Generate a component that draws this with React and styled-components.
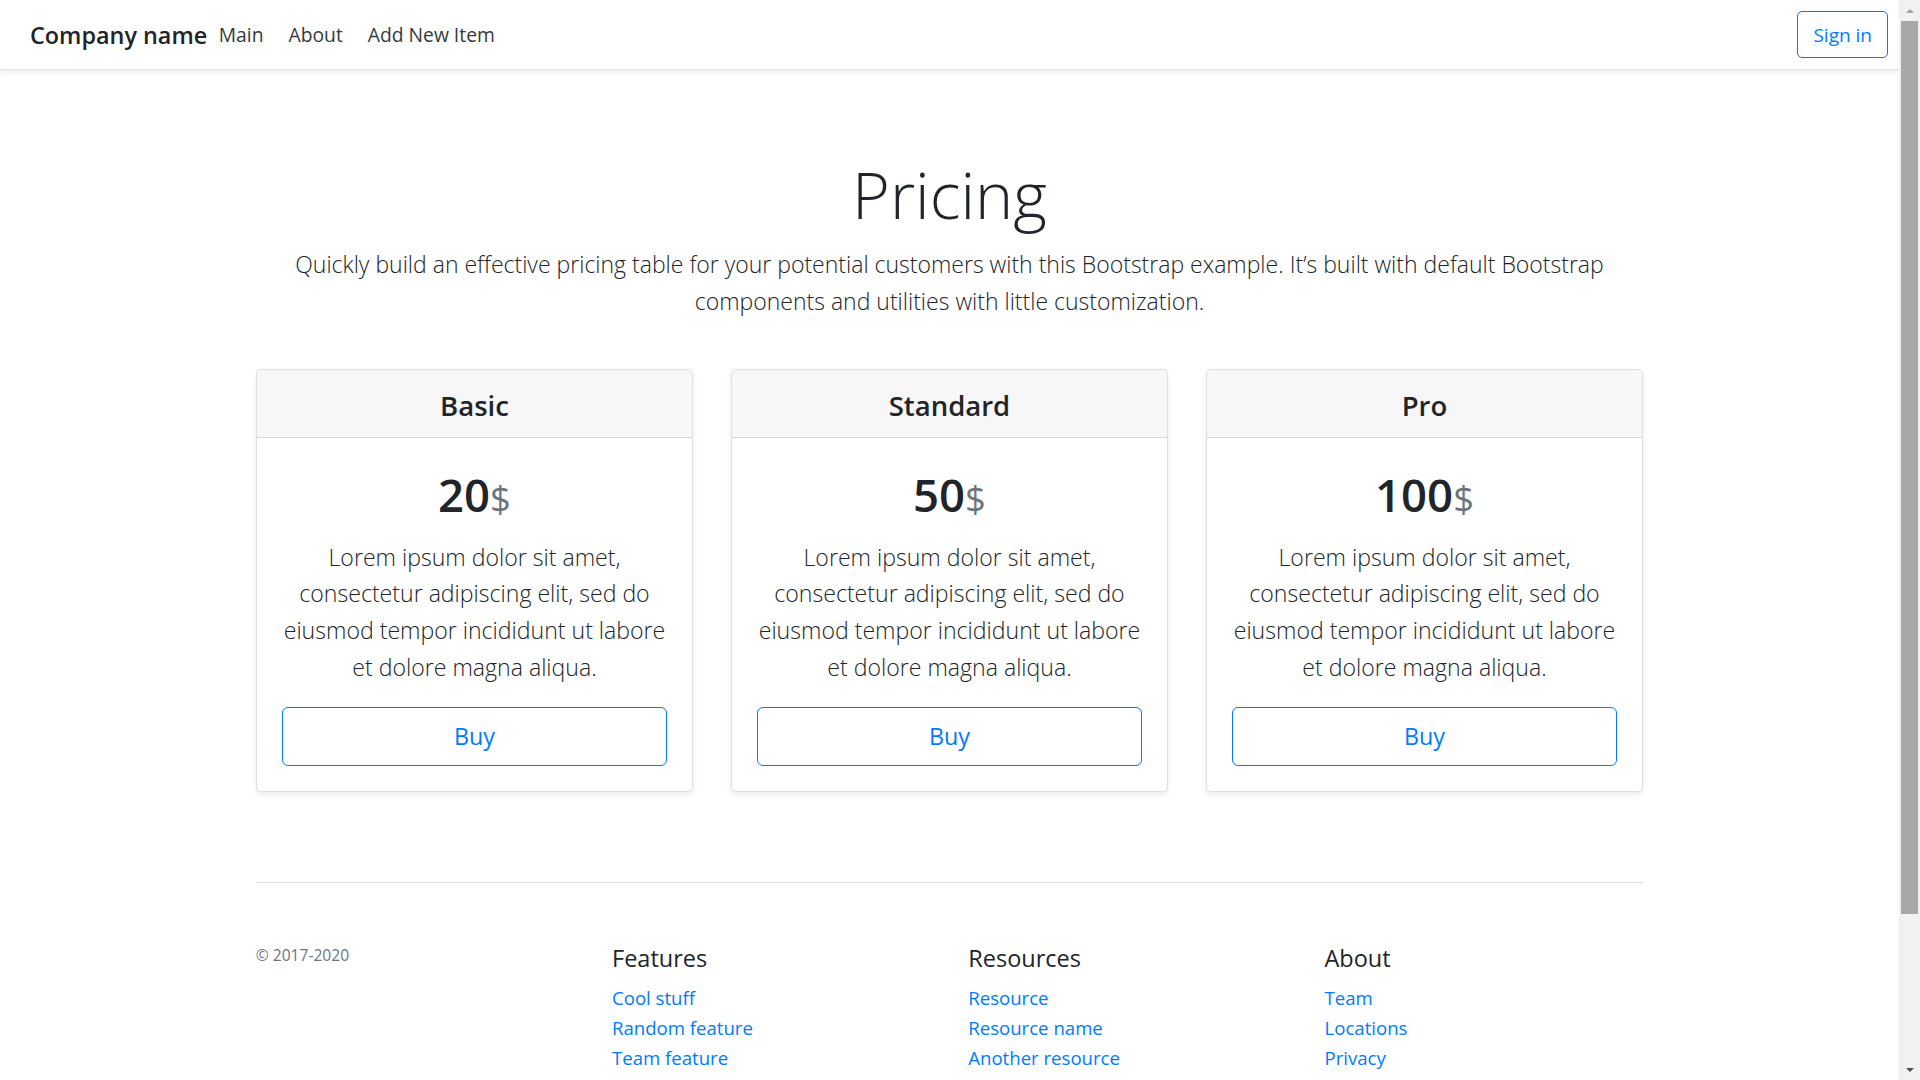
import React from "react";
import styled, { createGlobalStyle } from "styled-components";

const Global = createGlobalStyle`
  html, body { margin: 0; padding: 0; }
  body {
    font-family: "Open Sans", "Noto Sans", "Liberation Sans", sans-serif;
    font-size: 20px;
    line-height: 1.5;
    color: #212529;
    background: #fff;
  }
`;

const Page = styled.div`
  margin-right: 21px;
  min-height: 1255px;
`;

/* Window scrollbar drawn over the right edge, as in the screenshot */
const ScrollTrack = styled.div`
  position: fixed;
  top: 0;
  right: 0;
  width: 21px;
  height: 100vh;
  background: #f1f1f1;
  display: flex;
  flex-direction: column;
  align-items: center;
`;

const ScrollArrow = styled.div`
  height: 21px;
  width: 21px;
  flex: none;
  display: flex;
  align-items: center;
  justify-content: center;
  &::before {
    content: "";
    width: 0;
    height: 0;
    border-left: 4.5px solid transparent;
    border-right: 4.5px solid transparent;
    ${(p) =>
      p.$down
        ? "border-top: 4.5px solid #505050;"
        : "border-bottom: 4.5px solid #a3a3a3;"}
  }
`;

const ScrollThumb = styled.div`
  width: 17px;
  height: 893px;
  background: #a8a8a8;
  flex: none;
`;

const ScrollSpacer = styled.div`
  flex: 1;
`;

const Navbar = styled.header`
  display: flex;
  align-items: center;
  height: 70px;
  box-sizing: border-box;
  padding: 2px 11px 0 30px;
  background: #fff;
  border-bottom: 1px solid #dee2e6;
  box-shadow: 0 2.5px 5px rgba(0, 0, 0, 0.075);
  margin-bottom: 22px;
`;

const Brand = styled.div`
  font-size: 23.4px;
  font-weight: 600;
  line-height: 1.2;
  color: #212529;
  margin-right: -1px;
`;

const Nav = styled.nav`
  display: flex;
  margin-right: auto;
`;

const NavLink = styled.a`
  padding: 0 12.5px;
  font-size: 19.3px;
  color: #343a40;
  text-decoration: none;
`;

const OutlineButton = styled.a`
  display: inline-block;
  box-sizing: border-box;
  border: 1px solid #007bff;
  border-radius: ${(p) => (p.$large ? "6px" : "5px")};
  color: #007bff;
  background: transparent;
  text-align: center;
  text-decoration: none;
  font-size: ${(p) => (p.$large ? "23.3px" : "19px")};
  line-height: ${(p) => (p.$large ? "37.5px" : "30px")};
  padding: ${(p) => (p.$large ? "9.5px 20px" : "7.5px 15px")};
  width: ${(p) => (p.$block ? "100%" : "auto")};
  margin-top: ${(p) => (p.$large ? "0" : "-2px")};
`;

const Hero = styled.section`
  padding: 60px 18.75px 30px;
  text-align: center;
`;

const Title = styled.h1`
  margin: 0 0 10px;
  font-size: 64.7px;
  font-weight: 300;
  line-height: 84px;
`;

const Lead = styled.p`
  margin: 0 auto 19px;
  max-width: 1387.5px;
  font-size: 23px;
  font-weight: 300;
  line-height: 36.75px;
`;

const Container = styled.div`
  width: 1387.5px;
  margin: 0 auto;
`;

const CardDeck = styled.div`
  display: grid;
  grid-template-columns: repeat(3, 1fr);
  gap: 37.5px;
  text-align: center;
`;

const Card = styled.div`
  border: 1px solid rgba(0, 0, 0, 0.125);
  border-radius: 5px;
  box-shadow: 0 2.5px 5px rgba(0, 0, 0, 0.075);
  background: #fff;
  overflow: hidden;
`;

const CardHeader = styled.div`
  background: rgba(0, 0, 0, 0.03);
  border-bottom: 1px solid rgba(0, 0, 0, 0.125);
  padding: 18px 25px 13.2px;
`;

const CardTitle = styled.h4`
  margin: 0;
  font-size: 27.5px;
  font-weight: 600;
  line-height: 36px;
`;

const CardBody = styled.div`
  padding: 26.3px 25px 25px;
`;

const Price = styled.h1`
  margin: 0 0 10.7px;
  font-size: 45.5px;
  font-weight: 600;
  line-height: 60px;
`;

const Currency = styled.small`
  font-size: 80%;
  font-weight: 400;
  color: #6c757d;
`;

const Description = styled.p`
  margin: 0 0 21.7px;
  font-size: 23.1px;
  font-weight: 300;
  line-height: 36.75px;
`;

const Footer = styled.footer`
  margin-top: 90px;
  padding-top: 60.2px;
  border-top: 1px solid #dee2e6;
  display: grid;
  grid-template-columns: repeat(4, 1fr);
  gap: 37.5px;
`;

const Copyright = styled.small`
  display: block;
  font-size: 15.6px;
  line-height: 24px;
  color: #6c757d;
`;

const FooterTitle = styled.h5`
  margin: 0 0 10px;
  font-size: 23.5px;
  font-weight: 500;
  line-height: 30px;
`;

const LinkList = styled.ul`
  list-style: none;
  margin: 0 0 20px;
  padding: 0;
`;

const FooterLink = styled.a`
  display: block;
  font-size: 18.6px;
  line-height: 30px;
  color: #007bff;
  text-decoration: none;
`;

const plans = [
  { name: "Basic", price: 20 },
  { name: "Standard", price: 50 },
  { name: "Pro", price: 100 },
];

const footerCols = [
  { title: "Features", links: ["Cool stuff", "Random feature", "Team feature"] },
  { title: "Resources", links: ["Resource", "Resource name", "Another resource"] },
  { title: "About", links: ["Team", "Locations", "Privacy"] },
];

export default function App() {
  return (
    <Page>
      <Global />
      <Navbar>
        <Brand>Company name</Brand>
        <Nav>
          <NavLink href="#">Main</NavLink>
          <NavLink href="#">About</NavLink>
          <NavLink href="#">Add New Item</NavLink>
        </Nav>
        <OutlineButton href="#">Sign in</OutlineButton>
      </Navbar>

      <Hero>
        <Title>Pricing</Title>
        <Lead>
          Quickly build an effective pricing table for your potential customers with this Bootstrap
          example. It’s built with default Bootstrap components and utilities with little
          customization.
        </Lead>
      </Hero>

      <Container>
        <CardDeck>
          {plans.map((p) => (
            <Card key={p.name}>
              <CardHeader>
                <CardTitle>{p.name}</CardTitle>
              </CardHeader>
              <CardBody>
                <Price>
                  {p.price}
                  <Currency>$</Currency>
                </Price>
                <Description>
                  Lorem ipsum dolor sit amet, consectetur adipiscing elit, sed do eiusmod tempor
                  incididunt ut labore et dolore magna aliqua.
                </Description>
                <OutlineButton href="#" $large $block>
                  Buy
                </OutlineButton>
              </CardBody>
            </Card>
          ))}
        </CardDeck>

        <Footer>
          <div>
            <Copyright>© 2017-2020</Copyright>
          </div>
          {footerCols.map((c) => (
            <div key={c.title}>
              <FooterTitle>{c.title}</FooterTitle>
              <LinkList>
                {c.links.map((l) => (
                  <li key={l}>
                    <FooterLink href="#">{l}</FooterLink>
                  </li>
                ))}
              </LinkList>
            </div>
          ))}
        </Footer>
      </Container>

      <ScrollTrack aria-hidden="true">
        <ScrollArrow />
        <ScrollThumb />
        <ScrollSpacer />
        <ScrollArrow $down />
      </ScrollTrack>
    </Page>
  );
}
